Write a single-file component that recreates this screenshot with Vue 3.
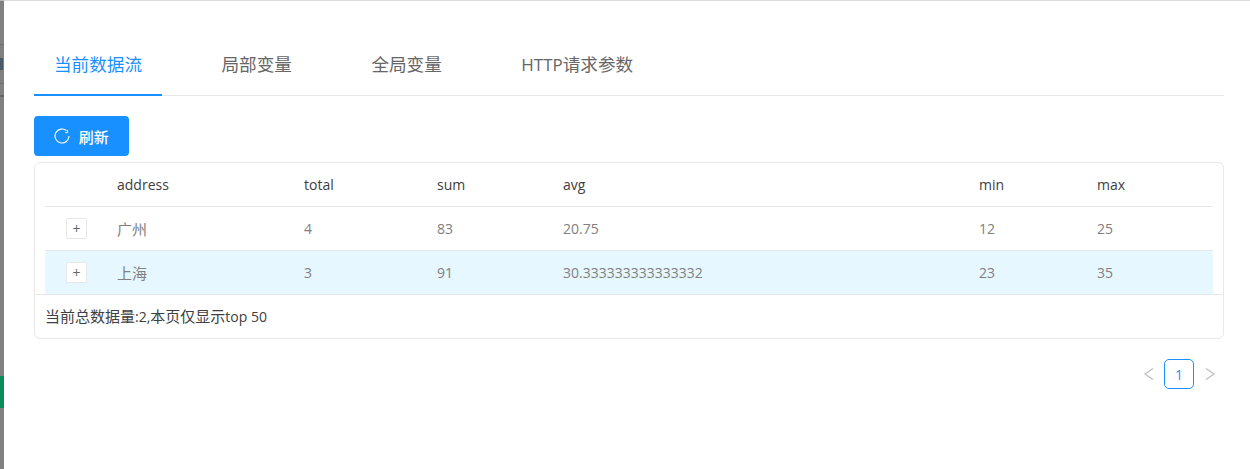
<script setup>
const tabs = [
  { cjk: '当前数据流', latin: '' },
  { cjk: '局部变量', latin: '' },
  { cjk: '全局变量', latin: '' },
  { cjk: '请求参数', latin: 'HTTP' }
]
const rows = [
  { address: '广州', total: 4, sum: 83, avg: '20.75', min: 12, max: 25 },
  { address: '上海', total: 3, sum: 91, avg: '30.333333333333332', min: 23, max: 35, hl: true }
]
</script>

<template>
  <div class="page">
    <div class="strip">
      <span class="strip-glyph"></span>
      <span class="strip-green"></span>
    </div>
    <main class="main">
      <nav class="tabs">
        <div v-for="(t, i) in tabs" :key="t.cjk" class="tab" :class="{ active: i === 0 }"><span class="tab-latin">{{ t.latin }}</span>{{ t.cjk }}</div>
      </nav>
      <button class="refresh">
        <svg width="16" height="16" viewBox="0 0 16 16" fill="none">
          <path d="M15 8A7 7 0 1 1 12.6 2.7" stroke="#fff" stroke-width="1.1"/>
          <path d="M13.6 2v2.6H11.2" stroke="#fff" stroke-width="0.9"/>
        </svg>
        <span>刷新</span>
      </button>
      <section class="card">
        <div class="table">
          <div class="row head">
            <div class="c c0"></div>
            <div class="c">address</div>
            <div class="c">total</div>
            <div class="c">sum</div>
            <div class="c">avg</div>
            <div class="c">min</div>
            <div class="c">max</div>
          </div>
          <div v-for="r in rows" :key="r.address" class="row body" :class="{ hl: r.hl }">
            <div class="c c0"><span class="expand">+</span></div>
            <div class="c cjk">{{ r.address }}</div>
            <div class="c">{{ r.total }}</div>
            <div class="c">{{ r.sum }}</div>
            <div class="c">{{ r.avg }}</div>
            <div class="c">{{ r.min }}</div>
            <div class="c">{{ r.max }}</div>
          </div>
        </div>
        <div class="foot"><span class="cjk">当前总数据量</span>:2,<span class="cjk">本页仅显示</span>top 50</div>
      </section>
      <div class="pager">
        <svg width="12" height="14" viewBox="0 0 12 14" fill="none"><path d="M10 1.500 2 7l8 5.500" stroke="#bfbfbf" stroke-width="1.300"/></svg>
        <span class="page-num">1</span>
        <svg class="next" width="12" height="14" viewBox="0 0 12 14" fill="none"><path d="M2 1.500 10 7l-8 5.500" stroke="#bfbfbf" stroke-width="1.300"/></svg>
      </div>
    </main>
  </div>
</template>

<style>
html, body { margin: 0; background: #fff; overflow: hidden; }
</style>

<style scoped>
.page {
  display: flex;
  height: 469px;
  font-family: "Open Sans", "Noto Sans CJK SC", sans-serif;
  color: #333;
  box-sizing: border-box;
  border-top: 1px solid #ddd;
}
.strip {
  width: 4px;
  margin-top: -1px;
  background: linear-gradient(180deg, #b4b4b4 0 1px, #808080 1px 44px, #707070 44px 45px, #808080 45px 83px, #707070 83px 84px, #808080 84px 95px, #666 95px 97px, #808080 97px);
  display: flex;
  flex-direction: column;
  flex: none;
}
.strip-glyph {
  height: 12px;
  margin-top: 58px;
  width: 3px;
  background: #4a5a6a;
}
.strip-green {
  height: 32px;
  margin-top: 306px;
  background: #0b8a5a;
}
.main {
  flex: 1;
  padding: 43px 26px 0 30px;
  min-width: 0;
}
.tabs {
  display: flex;
  gap: 39.5px;
  border-bottom: 1px solid #e8e8e8;
  height: 51px;
}
.tab {
  padding: 0 20px;
  height: 52px;
  line-height: 41px;
  font-size: 17.6px;
  color: #666;
  box-sizing: border-box;
}
.tab-latin { font-size: 17px; }
.tab.active {
  color: #1890ff;
  border-bottom: 2px solid #1890ff;
}
.refresh {
  display: flex;
  align-items: center;
  justify-content: center;
  gap: 8.5px;
  width: 95px;
  height: 40px;
  margin-top: 20px;
  border: 0;
  border-radius: 4px;
  background: #1890ff;
  color: #fff;
  font: 500 15px "Open Sans", "Noto Sans CJK SC", sans-serif;
  padding: 0;
}
.card {
  margin-top: 6px;
  border: 1px solid #e8e8e8;
  border-radius: 6px;
  font-size: 14px;
}
.cjk { font-size: 15px; }
.table { padding: 0 10px; }
.row {
  display: grid;
  grid-template-columns: 72px 187px 133px 126px 416px 118px 1fr;
  height: 44px;
  align-items: center;
  border-bottom: 1px solid #e8e8e8;
  box-sizing: border-box;
}
.head { color: #404040; }
.body { color: #808080; }
.hl { background: #e6f7ff; }
.row:last-child { border-bottom: 0; height: 43px; }
.c { white-space: nowrap; }
.c0 { display: flex; justify-content: flex-start; padding-left: 21px; }
.expand {
  width: 21px;
  height: 21px;
  box-sizing: border-box;
  background: #fff;
  border: 1px solid #e8e8e8;
  border-radius: 2px;
  display: flex;
  align-items: center;
  justify-content: center;
  font-size: 14px;
  color: #666;
}
.foot {
  border-top: 1px solid #e8e8e8;
  height: 43px;
  line-height: 42px;
  padding-left: 10px;
  font-size: 14px;
  color: #404040;
}
.pager {
  display: flex;
  justify-content: flex-end;
  align-items: center;
  gap: 9px;
  margin-top: 20px;
  padding-right: 8px;
}
.next { margin-left: 1px; }
.page-num {
  width: 30px;
  height: 30px;
  box-sizing: border-box;
  border: 1px solid #1890ff;
  border-radius: 5px;
  color: #1890ff;
  font-size: 14px;
  font-weight: 500;
  display: flex;
  align-items: center;
  justify-content: center;
}
</style>
